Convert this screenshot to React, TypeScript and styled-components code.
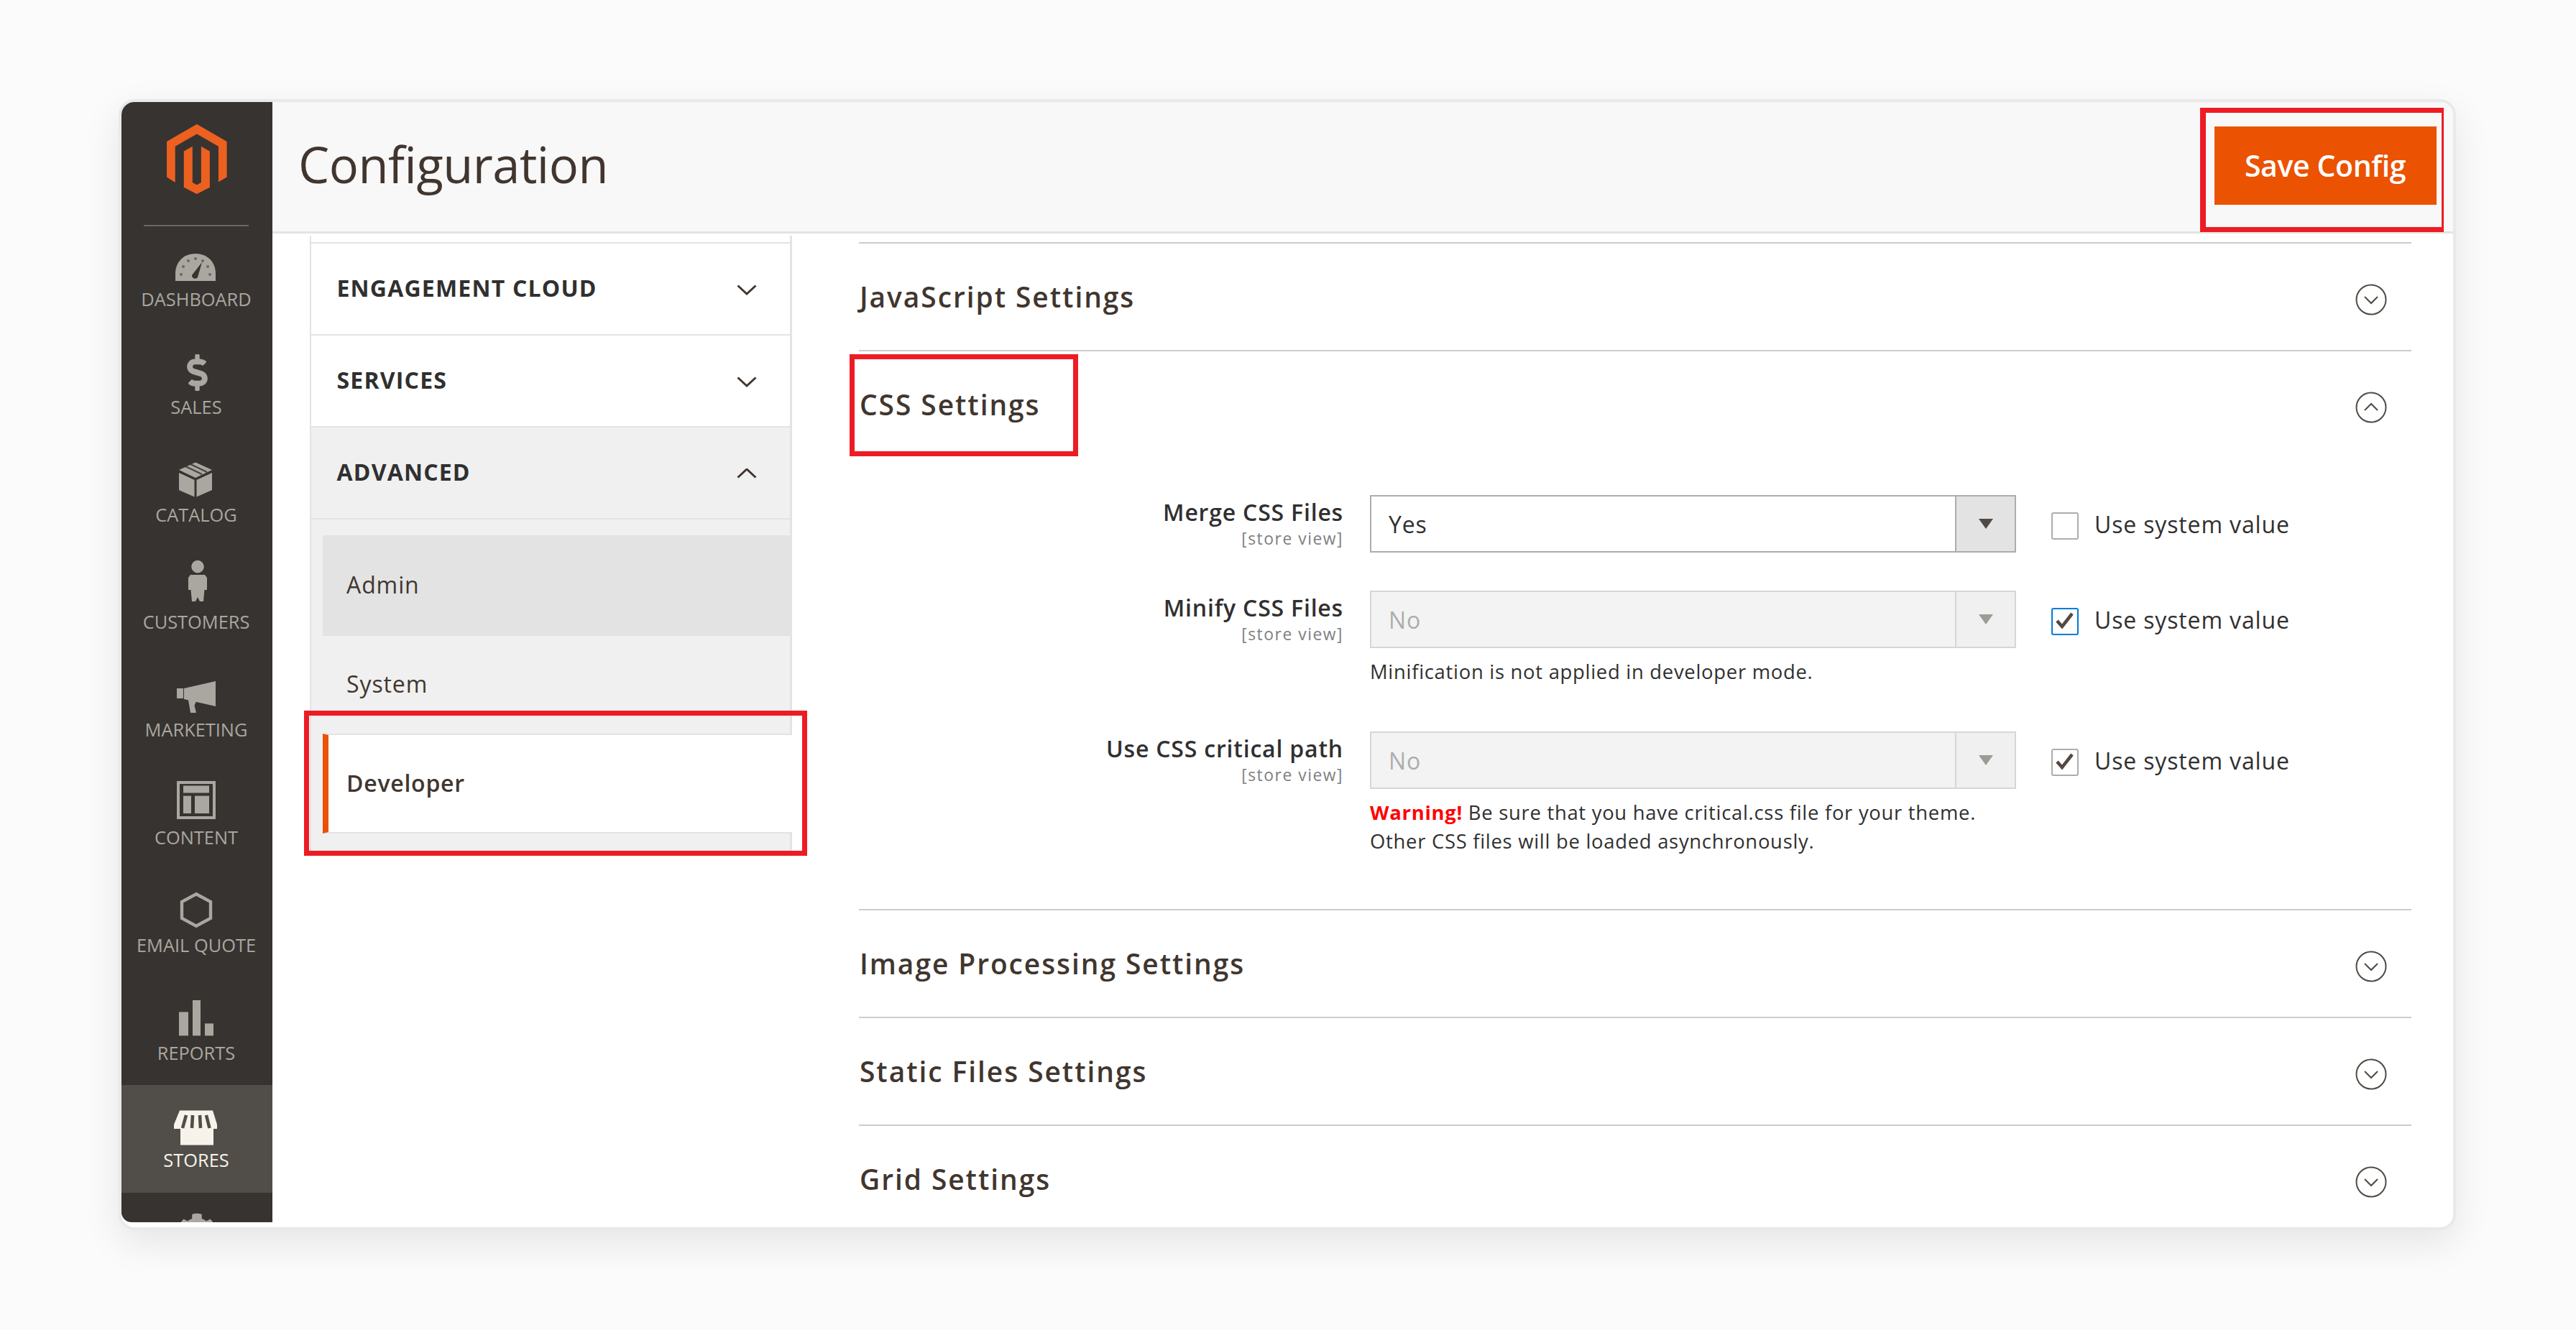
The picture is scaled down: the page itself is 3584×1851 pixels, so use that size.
import React from "react";
import styled, { createGlobalStyle } from "styled-components";
import { FaCog, FaDollarSign } from "react-icons/fa";

const GlobalStyle = createGlobalStyle`
  html, body { margin: 0; padding: 0; background: #fbfbfb; }
  body { font-family: "Open Sans", "Noto Sans", sans-serif; color: #303030; }
  * { box-sizing: border-box; }
`;

const Page = styled.div`
  width: 3584px;
  height: 1851px;
  padding: 138px 167px 0 165px;
  overflow: hidden;
`;
const Card = styled.div`
  position: relative;
  display: flex;
  height: 1574px;
  background: #fff;
  border: 4px solid #e9e9e9;
  border-radius: 22px;
  box-shadow: 0 18px 52px rgba(0, 0, 0, 0.09);
  overflow: hidden;
`;
const Highlight = styled.div<{ $x: number; $y: number; $w: number; $h: number; $thinRight?: boolean }>`
  position: absolute;
  left: ${(p) => p.$x - 169}px;
  top: ${(p) => p.$y - 142}px;
  width: ${(p) => p.$w}px;
  height: ${(p) => p.$h}px;
  border: 7px solid #ed1c24;
  border-right-width: ${(p) => (p.$thinRight ? 3 : 7)}px;
  border-left-width: ${(p) => (p.$thinRight ? 8 : 7)}px;
  pointer-events: none;
`;

/* ---------- left admin menu ---------- */
const Sidebar = styled.nav`
  flex: 0 0 210px;
  height: 1559px;
  background: #373330;
  border-bottom-left-radius: 14px;
  overflow: hidden;
`;
const LogoBlock = styled.div`
  height: 170px;
  padding-top: 30px;
  display: flex;
  justify-content: center;
`;
const Divider = styled.div`
  position: relative;
  height: 2px;
  margin: 1px 33px -3px 31px;
  background: #6b6763;
`;
const MenuItem = styled.div<{ $active?: boolean }>`
  height: 149.8px;
  padding-top: 10px;
  display: flex;
  flex-direction: column;
  align-items: center;
  background: ${(p) => (p.$active ? "#514d49" : "transparent")};
  color: ${(p) => (p.$active ? "#f7f3eb" : "#aaa6a0")};
`;
const MenuIcon = styled.div<{ $pad?: number }>`
  width: 100px;
  height: 76px;
  padding-top: ${(p) => p.$pad ?? 0}px;
  display: flex;
  justify-content: center;
  align-items: flex-start;
  flex: none;
`;
const MenuLabel = styled.span`
  margin: 3px 2px 0 0;
  font-size: 25.4px;
  line-height: 30px;
  text-transform: uppercase;
  white-space: nowrap;
`;

const G = ({ children }: { children: React.ReactNode }) => (
  <svg width="100" height="76" viewBox="0 0 100 76" fill="currentColor">{children}</svg>
);
const BG = "#373330";
const icons: Record<string, React.ReactNode> = {
  dashboard: (
    <G>
      <path d="M20 69V59C20 42 32 31 48 31S76 42 76 59V69Z" />
      <g fill={BG} opacity=".55">
        <circle cx="28" cy="60" r="2" /><circle cx="31" cy="49" r="2" /><circle cx="38" cy="41" r="2" />
        <circle cx="48" cy="38" r="2" /><circle cx="58" cy="41" r="2" /><circle cx="65" cy="49" r="2" /><circle cx="68" cy="60" r="2" />
      </g>
      <path d="M43 61L57 43L51 64A4.5 4.5 0 0 1 43 61Z" fill={BG} />
    </G>
  ),
  catalog: (
    <G>
      <path d="M48 21.6L71 32L48 43L25 32Z" />
      <path d="M25 36L46.5 46V69.6L25 60Z" />
      <path d="M71 36L49.5 46V69.6L71 60Z" />
      <path d="M34 27L57 38M41 24L64 35" stroke={BG} strokeWidth="2" opacity=".85" />
    </G>
  ),
  customers: (
    <G>
      <circle cx="51" cy="17.6" r="8.8" />
      <path d="M41 29H61L64 33V50H60.5L59 66H54L51 60L48 66H43L41.5 50H38V33Z" />
    </G>
  ),
  marketing: (
    <G>
      <rect x="22" y="37" width="9" height="14" />
      <path d="M32 37L76 27V62L32 52Z" />
      <path d="M38 53L49 55L46.5 61L49 71H41Z" />
    </G>
  ),
  content: (
    <G>
      <rect x="24" y="18" width="50" height="49" fill="none" stroke="currentColor" strokeWidth="4" />
      <rect x="31" y="22.5" width="36" height="10" />
      <rect x="31" y="36.6" width="11" height="24.4" />
      <rect x="47" y="36.6" width="20" height="24.4" />
    </G>
  ),
  email: (
    <G>
      <path d="M49 23.2L69 34V57L49 67.8L29 57V34Z" fill="none" stroke="currentColor" strokeWidth="4.4" />
    </G>
  ),
  reports: (
    <G>
      <rect x="25" y="37.4" width="13" height="33" />
      <rect x="44" y="21" width="11" height="49.4" />
      <rect x="61" y="53.4" width="12" height="17" />
    </G>
  ),
  stores: (
    <G>
      <path d="M26 25.6H72L78 45V51H18V45Z" />
      <path d="M35 32L30 50M44 32L43 50M54 32L55 50M63 32L67.5 50" stroke="#514d49" strokeWidth="4.6" />
      <rect x="27" y="51" width="46" height="22.6" />
    </G>
  ),
};

const menu = [
  { key: "dashboard", label: "Dashboard" },
  { key: "sales", label: "Sales" },
  { key: "catalog", label: "Catalog" },
  { key: "customers", label: "Customers" },
  { key: "marketing", label: "Marketing" },
  { key: "content", label: "Content" },
  { key: "email", label: "Email Quote" },
  { key: "reports", label: "Reports" },
  { key: "stores", label: "Stores", active: true },
];

/* ---------- right column ---------- */
const Main = styled.div`
  flex: 1;
  min-width: 0;
  display: flex;
  flex-direction: column;
`;
const PageHeader = styled.header`
  flex: 0 0 183px;
  padding: 34px 23.5px 0 37px;
  display: flex;
  justify-content: space-between;
  align-items: flex-start;
  background: #f8f8f8;
  border-bottom: 3px solid #e3e3e3;
`;
const PageTitle = styled.h1`
  margin: 6px 0 0 -1px;
  font-size: 68.6px;
  line-height: 93px;
  font-weight: 400;
  letter-spacing: -0.5px;
  color: #41362f;
`;
const SaveButton = styled.button`
  width: 309px;
  height: 109px;
  border: 0;
  padding: 0;
  background: #eb5202;
  color: #fff;
  font: 600 41px/1 "Open Sans", sans-serif;
  letter-spacing: -0.4px;
`;
const Body = styled.div`
  flex: 1;
  min-height: 0;
  padding-left: 52px;
  display: flex;
  align-items: flex-start;
  gap: 93px;
`;

/* ---------- config tabs ---------- */
const Tabs = styled.div`
  flex: 0 0 671px;
  margin-top: 3px;
  border-left: 2px solid #e3e3e3;
  border-right: 3px solid #e3e3e3;
  display: flex;
  flex-direction: column;
`;
const TabStub = styled.div`
  height: 9px;
`;
const TabHead = styled.div<{ $open?: boolean }>`
  height: 128px;
  padding: 0 46px 3px 35.5px;
  display: flex;
  align-items: center;
  justify-content: space-between;
  border-top: 2px solid #e3e3e3;
  background: ${(p) => (p.$open ? "#f0f0f0" : "#fff")};
  font-size: 32px;
  font-weight: 700;
  letter-spacing: 1.2px;
  color: #303030;
  text-transform: uppercase;
`;
const TabChevron = styled.svg`
  width: 28px;
  height: 16px;
  margin-top: 6px;
  fill: none;
  stroke: #41362f;
  stroke-width: 3;
`;
const SubList = styled.div`
  padding: 22px 0 28px 16px;
  background: #f0f0f0;
  border-top: 2px solid #e3e3e3;
  display: flex;
  flex-direction: column;
`;
const SubItem = styled.div<{ $h: number; $hover?: boolean }>`
  height: ${(p) => p.$h}px;
  padding: 0 0 3px 33px;
  display: flex;
  align-items: center;
  background: ${(p) => (p.$hover ? "#e3e3e3" : "transparent")};
  font-size: 32px;
  letter-spacing: 0.9px;
  color: #41362f;
`;
const SubItemActive = styled.div`
  position: relative;
  height: 139px;
  margin-right: -3px;
  padding: 0 0 3px 25px;
  display: flex;
  align-items: center;
  background: #fff;
  border-top: 2px solid #e3e3e3;
  border-bottom: 2px solid #e3e3e3;
  border-left: 8px solid #eb5202;
  font-size: 32px;
  font-weight: 600;
  letter-spacing: 0.75px;
  color: #41362f;
`;

/* ---------- settings sections ---------- */
const Sections = styled.div`
  flex: 0 0 2160px;
  padding-top: 12px;
`;
const Section = styled.section`
  border-top: 2px solid #cccccc;
`;
const SectionHead = styled.div`
  height: 148px;
  padding: 0 34px 0 1px;
  display: flex;
  align-items: center;
  justify-content: space-between;
`;
const SectionTitle = styled.h2`
  margin: 0 0 2px;
  font-size: 38.9px;
  font-weight: 600;
  letter-spacing: 1.95px;
  color: #41362f;
`;
const Toggle = styled.svg`
  width: 44px;
  height: 44px;
  margin-top: 8px;
  fill: none;
  stroke: #514943;
  stroke-width: 2;
`;
const SectionBody = styled.div`
  padding: 52px 0 74px 1px;
  display: flex;
  flex-direction: column;
`;
const FieldRow = styled.div<{ $gap?: number }>`
  display: grid;
  grid-template-columns: 673px 899px 1fr;
  column-gap: 37px;
  margin-top: ${(p) => p.$gap ?? 0}px;
`;
const FieldLabel = styled.div`
  text-align: right;
  padding-top: 4px;
`;
const LabelText = styled.div`
  font-size: 32px;
  line-height: 40px;
  font-weight: 600;
  letter-spacing: 0.8px;
  color: #303030;
`;
const Scope = styled.div`
  margin-top: 3px;
  font-size: 22.9px;
  line-height: 28px;
  letter-spacing: 1.5px;
  color: #808080;
`;
const Select = styled.div<{ $disabled?: boolean }>`
  height: 80px;
  display: flex;
  align-items: stretch;
  border: 2px solid ${(p) => (p.$disabled ? "#d6d6d6" : "#adadad")};
  background: ${(p) => (p.$disabled ? "#f3f3f3" : "#fff")};
`;
const SelectValue = styled.div<{ $disabled?: boolean }>`
  flex: 1;
  padding-left: 24px;
  display: flex;
  align-items: center;
  font-size: 32px;
  letter-spacing: 0.8px;
  color: ${(p) => (p.$disabled ? "#adadad" : "#303030")};
`;
const SelectArrow = styled.div<{ $disabled?: boolean }>`
  flex: 0 0 83px;
  display: flex;
  align-items: center;
  justify-content: center;
  border-left: 2px solid ${(p) => (p.$disabled ? "#d6d6d6" : "#adadad")};
  background: ${(p) => (p.$disabled ? "#f0f0f0" : "#e3e3e3")};
  &::after {
    content: "";
    border-style: solid;
    border-width: 14px 10px 0;
    border-color: ${(p) => (p.$disabled ? "#9e9a96" : "#514943")} transparent transparent;
  }
`;
const Note = styled.div`
  margin-top: 13px;
  font-size: 27.4px;
  line-height: 40px;
  letter-spacing: 0.73px;
  color: #303030;
`;
const WarningWord = styled.strong`
  color: #f00;
  font-weight: 700;
`;
const SystemValue = styled.label`
  margin-left: 12px;
  height: 80px;
  display: flex;
  align-items: center;
  gap: 22px;
  font-size: 32px;
  letter-spacing: 0.85px;
  color: #303030;
`;
const CheckBox = styled.span<{ $focus?: boolean }>`
  flex: none;
  width: 38px;
  height: 38px;
  margin-top: 6px;
  border: 2px solid ${(p) => (p.$focus ? "#007bdb" : "#adadad")};
  border-radius: 3px;
  background: #fff;
  display: flex;
`;

const Checkmark = () => (
  <svg width="34" height="34" viewBox="0 0 34 34" fill="none" stroke="#514943" strokeWidth="4.5">
    <path d="M6 16L13 24L27 6" />
  </svg>
);
const ToggleIcon = ({ open }: { open?: boolean }) => (
  <Toggle viewBox="0 0 44 44">
    <circle cx="22" cy="22" r="20.5" />
    <path d={open ? "M13 26L22 17L31 26" : "M13 18L22 27L31 18"} />
  </Toggle>
);

const FieldControl = ({ value, disabled }: { value: string; disabled?: boolean }) => (
  <Select $disabled={disabled}>
    <SelectValue $disabled={disabled}>{value}</SelectValue>
    <SelectArrow $disabled={disabled} />
  </Select>
);
const FieldName = ({ text }: { text: string }) => (
  <FieldLabel>
    <LabelText>{text}</LabelText>
    <Scope>[store view]</Scope>
  </FieldLabel>
);
const UseSystem = ({ checked, focus }: { checked?: boolean; focus?: boolean }) => (
  <SystemValue>
    <CheckBox $focus={focus}>{checked && <Checkmark />}</CheckBox>
    Use system value
  </SystemValue>
);

const Chevron = ({ up }: { up?: boolean }) => (
  <TabChevron viewBox="0 0 28 16">
    <path d={up ? "M1.5 12.5L14 1L26.5 12.5" : "M1.5 1.5L14 13L26.5 1.5"} />
  </TabChevron>
);

const Collapsed = ({ title }: { title: string }) => (
  <Section>
    <SectionHead>
      <SectionTitle>{title}</SectionTitle>
      <ToggleIcon />
    </SectionHead>
  </Section>
);

export default function App() {
  return (
    <Page>
      <GlobalStyle />
      <Card>
        <Sidebar>
          <LogoBlock>
            <svg width="83.7" height="98" viewBox="187 95 250 293" fill="#ec6020">
              <path d="M312 97L437 170V318L402 338V190L312 138L222 190V340L187 318V170Z" />
              <path d="M258 210L294 190V340L312 350L330 340V190L366 210V360L312 388L258 360Z" />
            </svg>
          </LogoBlock>
          <Divider />
          {menu.map((m) => (
            <MenuItem key={m.key} $active={m.active}>
              {m.key === "sales" ? (
                <MenuIcon $pad={21}><FaDollarSign size={51} /></MenuIcon>
              ) : (
                <MenuIcon>{icons[m.key]}</MenuIcon>
              )}
              <MenuLabel>{m.label}</MenuLabel>
            </MenuItem>
          ))}
          <MenuItem>
            <MenuIcon $pad={18}><FaCog size={54} /></MenuIcon>
          </MenuItem>
        </Sidebar>

        <Main>
          <PageHeader>
            <PageTitle>Configuration</PageTitle>
            <SaveButton>Save Config</SaveButton>
          </PageHeader>
          <Body>
            <Tabs>
              <TabStub />
              <TabHead>Engagement Cloud<Chevron /></TabHead>
              <TabHead>Services<Chevron /></TabHead>
              <TabHead $open>Advanced<Chevron up /></TabHead>
              <SubList>
                <SubItem $h={140} $hover>Admin</SubItem>
                <SubItem $h={136}>System</SubItem>
                <SubItemActive>Developer</SubItemActive>
              </SubList>
            </Tabs>

            <Sections>
              <Collapsed title="JavaScript Settings" />
              <Section>
                <SectionHead>
                  <SectionTitle>CSS Settings</SectionTitle>
                  <ToggleIcon open />
                </SectionHead>
                <SectionBody>
                  <FieldRow>
                    <FieldName text="Merge CSS Files" />
                    <FieldControl value="Yes" />
                    <UseSystem />
                  </FieldRow>
                  <FieldRow $gap={53}>
                    <FieldName text="Minify CSS Files" />
                    <div>
                      <FieldControl value="No" disabled />
                      <Note>Minification is not applied in developer mode.</Note>
                    </div>
                    <UseSystem checked focus />
                  </FieldRow>
                  <FieldRow $gap={63}>
                    <FieldName text="Use CSS critical path" />
                    <div>
                      <FieldControl value="No" disabled />
                      <Note>
                        <WarningWord>Warning!</WarningWord> Be sure that you have critical.css file for your theme.
                        <br />
                        Other CSS files will be loaded asynchronously.
                      </Note>
                    </div>
                    <UseSystem checked />
                  </FieldRow>
                </SectionBody>
              </Section>
              <Collapsed title="Image Processing Settings" />
              <Collapsed title="Static Files Settings" />
              <Collapsed title="Grid Settings" />
            </Sections>
          </Body>
        </Main>

        <Highlight $x={3061} $y={150} $w={339} $h={173} $thinRight />
        <Highlight $x={1182} $y={493} $w={318} $h={142} />
        <Highlight $x={423} $y={989} $w={700} $h={202} />
      </Card>
    </Page>
  );
}
